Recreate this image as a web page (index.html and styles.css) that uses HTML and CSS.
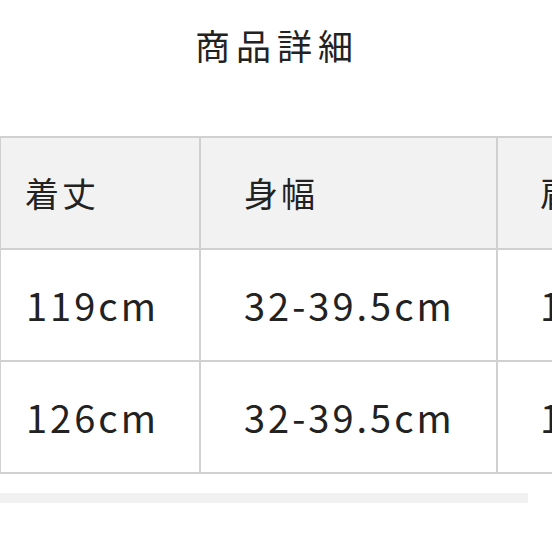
FILE: index.html
```html
<!DOCTYPE html>
<html lang="ja">
<head>
<meta charset="utf-8">
<link rel="stylesheet" href="styles.css">
</head>
<body>
<h1 class="title">商品詳細</h1>
<div class="scroller">
  <table class="sizes">
    <colgroup>
      <col class="w1">
      <col class="w2">
      <col class="w3">
    </colgroup>
    <tr class="head">
      <td class="c1">着丈</td>
      <td class="c2">身幅</td>
      <td class="c3">肩幅</td>
    </tr>
    <tr>
      <td class="c1">119cm</td>
      <td class="c2">32-39.5cm</td>
      <td class="c3">10cm</td>
    </tr>
    <tr>
      <td class="c1">126cm</td>
      <td class="c2">32-39.5cm</td>
      <td class="c3">10cm</td>
    </tr>
  </table>
</div>
<div class="bar"></div>
</body>
</html>
```

FILE: styles.css
```css
html, body {
  margin: 0;
  padding: 0;
  background: #fff;
}
body {
  width: 552px;
  height: 552px;
  overflow: hidden;
  font-family: "Noto Sans CJK JP", "Noto Sans", sans-serif;
  color: #222;
}
.title {
  margin: 0;
  height: 136px;
  padding-top: 21px;
  box-sizing: border-box;
  text-align: center;
  font-weight: 400;
  font-size: 35px;
  letter-spacing: 6px;
  text-indent: 2px;
  line-height: 48px;
}
.scroller {
  width: 552px;
  overflow: hidden;
}
.sizes {
  border-collapse: collapse;
  table-layout: fixed;
  width: 793px;
  margin-left: -1px;
}
.w1 { width: 200px; }
.w2 { width: 297px; }
.w3 { width: 296px; }
.sizes td {
  border: 2px solid #d0d0d0;
  height: 110px;
  padding: 0 0 0 25px;
  vertical-align: middle;
  font-size: 38px;
  letter-spacing: 3px;
  line-height: 1;
  white-space: nowrap;
  overflow: hidden;
}
.sizes .head td {
  background: #f2f2f2;
  font-size: 34px;
  letter-spacing: 3px;
  padding-left: 24px;
}
.sizes td.c2 { padding-left: 43px; }
.sizes td.c3 { padding-left: 42px; }
.bar {
  margin-top: 19px;
  width: 528px;
  height: 10px;
  background: #f1f1f1;
}
```
